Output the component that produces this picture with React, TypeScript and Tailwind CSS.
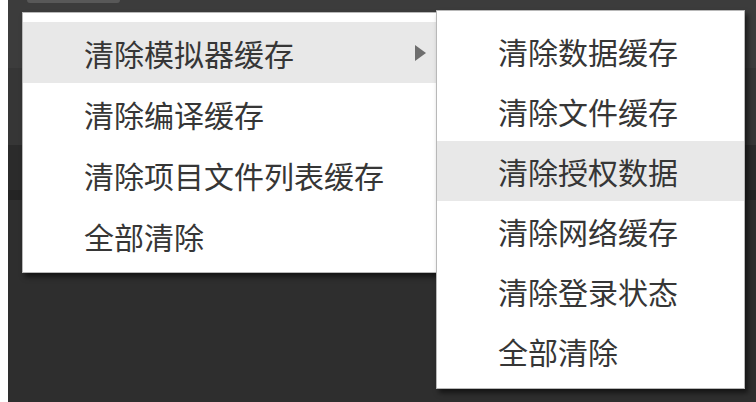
const mainItems = ['清除模拟器缓存', '清除编译缓存', '清除项目文件列表缓存', '全部清除']
const subItems = ['清除数据缓存', '清除文件缓存', '清除授权数据', '清除网络缓存', '清除登录状态', '全部清除']

const font = { fontFamily: '"Noto Sans CJK SC", "Noto Sans", sans-serif' }

const App = () => {
  return (
    <div className="relative flex w-[756px] h-[402px] overflow-hidden" style={font}>
      <div className="w-[8px] h-full bg-white" />
      <div className="flex flex-1 flex-col">
        <div className="h-[68px] bg-[#3c3c3c] pl-[19px]">
          <div className="w-[93px] h-[3px] rounded-b bg-[#585858]" />
        </div>
        <div className="h-[77px] bg-[#363636]" />
        <div className="h-[45px] bg-[#2b2b2b]" />
        <div className="h-[10px] bg-[#242424]" />
        <div className="flex-1 bg-[#2e2e2e]" />
      </div>

      {/* main context menu */}
      <div className="absolute left-[22px] top-[12px] w-[415px] border border-[#b8b8b8] bg-white pt-[9px] pb-[6px] shadow-[3px_4px_5px_rgba(0,0,0,0.55)]">
        {mainItems.map((t, i) => (
          <div
            key={t + i}
            className={`flex h-[61px] items-center pl-[61px] pr-[9px] text-[30px] text-[#363636] ${i === 0 ? 'bg-[#e8e8e8]' : ''}`}
          >
            <span className="flex-1 leading-none">{t}</span>
            {i === 0 && (
              <svg width="13" height="18" viewBox="0 0 13 18">
                <path d="M1 1 L12 9 L1 17 Z" fill="#6e6e6e" />
              </svg>
            )}
          </div>
        ))}
      </div>

      {/* submenu */}
      <div className="absolute left-[436px] top-[10px] w-[309px] border border-[#b8b8b8] bg-white pt-[10px] pb-[7px] shadow-[3px_4px_5px_rgba(0,0,0,0.55)]">
        {subItems.map((t, i) => (
          <div
            key={t + i}
            className={`flex h-[60px] items-center pl-[61px] text-[30px] leading-none text-[#363636] ${i === 2 ? 'bg-[#e8e8e8]' : ''}`}
          >
            {t}
          </div>
        ))}
      </div>
    </div>
  )
}

export default App
